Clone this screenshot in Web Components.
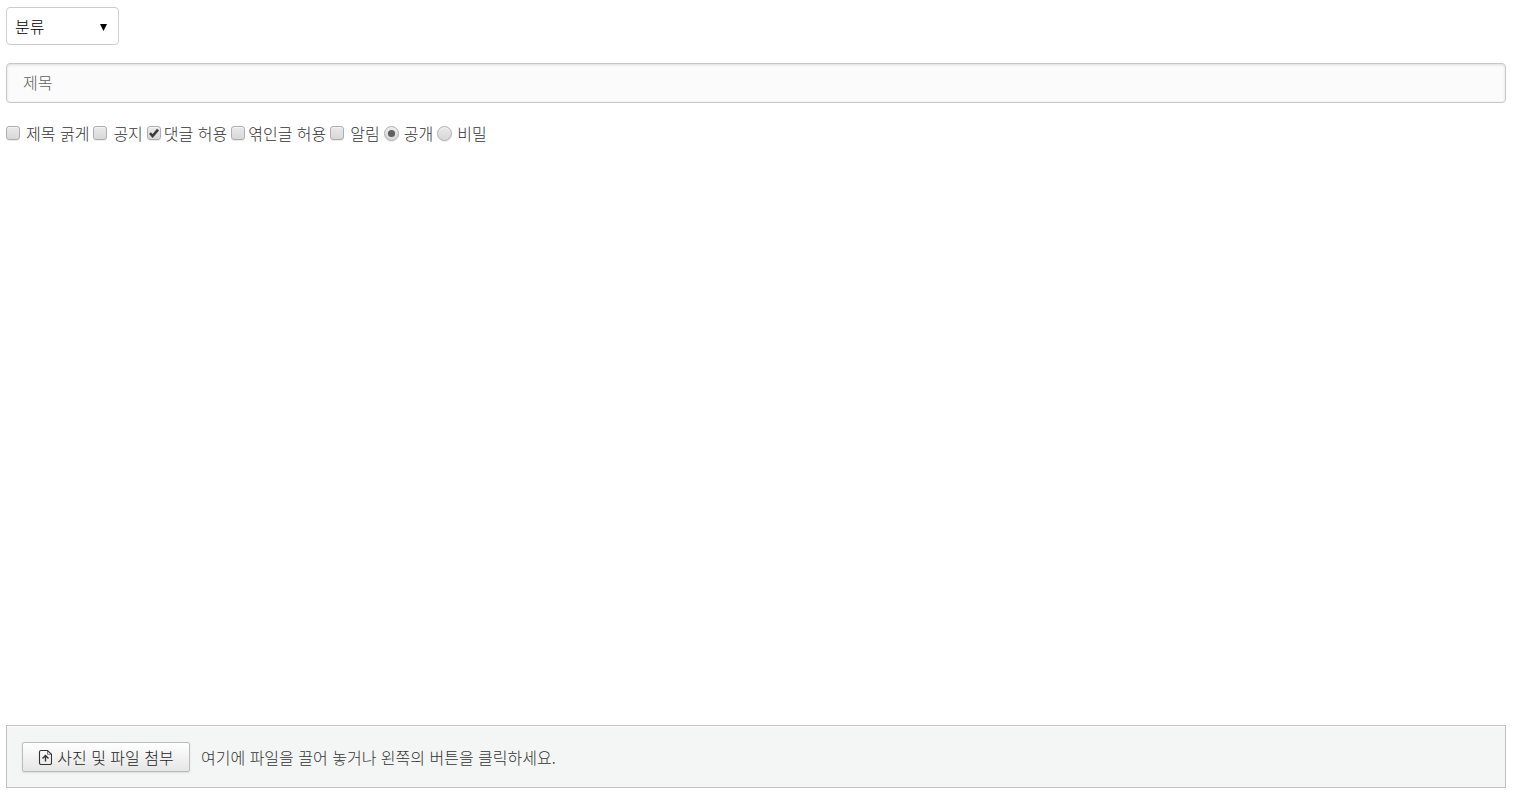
<!DOCTYPE html>
<html lang="ko">
<head>
<meta charset="utf-8">
<title>글쓰기</title>
<style>
html, body { margin: 0; }
body { background: #fff; color: #333; font: 300 16px/24px "Noto Sans CJK KR", sans-serif; }
</style>
</head>
<body>
<write-form>
  <category-select slot="head"></category-select>
  <title-field slot="head"></title-field>
  <option-row slot="head">
    <option-item type="checkbox" label="제목 굵게"></option-item>
    <option-item type="checkbox" label="공지"></option-item>
    <option-item type="checkbox" label="댓글 허용" checked tight></option-item>
    <option-item type="checkbox" label="엮인글 허용" tight></option-item>
    <option-item type="checkbox" label="알림"></option-item>
    <option-item type="radio" label="공개" checked></option-item>
    <option-item type="radio" label="비밀"></option-item>
  </option-row>
  <upload-panel slot="foot">여기에 파일을 끌어 놓거나 왼쪽의 버튼을 클릭하세요.</upload-panel>
</write-form>
<script>
const define = (name, html, setup) => customElements.define(name, class extends HTMLElement {
  connectedCallback() {
    if (this.shadowRoot) return;
    this.attachShadow({ mode: "open" }).innerHTML = html;
    if (setup) setup(this, this.shadowRoot);
  }
});

define("write-form", `
<style>
:host { display: block; }
form { box-sizing: border-box; min-height: 100vh; padding: 7px 13px 12px 6px; display: flex; flex-direction: column; }
.head { display: flex; flex-direction: column; gap: 18px; }
.editor { flex: 1; min-height: 200px; }
</style>
<form>
  <div class="head"><slot name="head"></slot></div>
  <div class="editor"></div>
  <slot name="foot"></slot>
</form>`);

define("category-select", `
<style>
:host { display: block; width: 113px; height: 38px; position: relative; }
select { appearance: none; box-sizing: border-box; width: 100%; height: 100%; margin: 0; padding: 0 24px 0 8px;
  border: 1px solid #ccc; border-radius: 4px; background: #fff; color: #000; font: inherit; }
svg { position: absolute; right: 12px; top: 17px; pointer-events: none; }
</style>
<select aria-label="분류"><option>분류</option></select>
<svg width="7" height="7" viewBox="0 0 7 7" aria-hidden="true"><path d="M0 0h7L3.5 7z" fill="#000"/></svg>`);

define("title-field", `
<style>
:host { display: block; }
input { display: block; box-sizing: border-box; width: 100%; height: 40px; margin: 0; padding: 0 16px 2px;
  border: 1px solid #c7c7c7; border-radius: 4px; background: #fbfbfb; color: #555; font: inherit;
  box-shadow: inset 0 1px 3px rgba(0,0,0,.12); }
input::placeholder { color: #606060; opacity: 1; }
</style>
<input type="text" placeholder="제목" aria-label="제목">`);

define("option-row", `
<style>
:host { display: flex; flex-wrap: wrap; gap: 4px; }
</style>
<slot></slot>`);

define("option-item", `
<style>
:host { display: block; }
label { display: flex; align-items: center; gap: 6px; white-space: nowrap; }
:host([tight]) label { gap: 3px; }
:host([type=radio]) label { gap: 5px; }
input { appearance: none; box-sizing: border-box; width: 14px; height: 14px; margin: 0; flex: none;
  border: 1px solid #adadad; border-radius: 3px;
  background: linear-gradient(#e9e9e9, #d8d8d8); box-shadow: 0 1px 0 rgba(0,0,0,.08), inset 0 1px 1px rgba(255,255,255,.6); }
.box { position: relative; display: flex; }
input[type=radio] { width: 15px; height: 15px; border-radius: 50%; }
svg { position: absolute; inset: 0; display: none; pointer-events: none; }
input[type=checkbox]:checked ~ .tick, input[type=radio]:checked ~ .dot { display: block; }
</style>
<label><span class="box"><input><svg class="tick" width="14" height="14" viewBox="0 0 14 14"><path d="M3 7.2l2.6 2.9L11 3.6" fill="none" stroke="#3c3c3c" stroke-width="2.6"/></svg><svg class="dot" width="15" height="15" viewBox="0 0 15 15"><circle cx="7.5" cy="7.5" r="3.6" fill="#606060"/></svg></span><span class="text"></span></label>`,
(host, root) => {
  const input = root.querySelector("input");
  input.type = host.getAttribute("type");
  input.checked = host.hasAttribute("checked");
  root.querySelector(".text").textContent = host.getAttribute("label");
});

define("upload-panel", `
<style>
:host { display: flex; align-items: center; gap: 11px; box-sizing: border-box; min-height: 63px; padding: 15px;
  border: 1px solid #c1c1c1; background: #f4f6f5; box-shadow: inset 0 1px 0 #fff; }
button { box-sizing: border-box; height: 30px; min-width: 168px; margin: 0; padding: 0 14px; flex: none;
  display: flex; align-items: center; justify-content: center; gap: 5px;
  border: 1px solid #bbb; border-radius: 2px; background: linear-gradient(#fff, #e6e6e6); color: #222;
  box-shadow: 0 1px 2px rgba(0,0,0,.1); font: inherit; white-space: nowrap; }
</style>
<button type="button"><svg width="14" height="16" viewBox="0 0 14 16" fill="none" stroke="#333" aria-hidden="true"><path d="M3 1.500H9.500L13.500 5.300V14Q13.500 15.500 12 15.500H3Q1.500 15.500 1.500 14V3Q1.500 1.500 3 1.500z" stroke-width="1.100"/><path d="M9.500 1.800V5.300h3.700" stroke-width=".6"/><path d="M7.500 12.500V6.800M4.500 9.500l3-3 3 3" stroke-width="1.400"/></svg>사진 및 파일 첨부</button>
<span><slot></slot></span>`);
</script>
</body>
</html>
